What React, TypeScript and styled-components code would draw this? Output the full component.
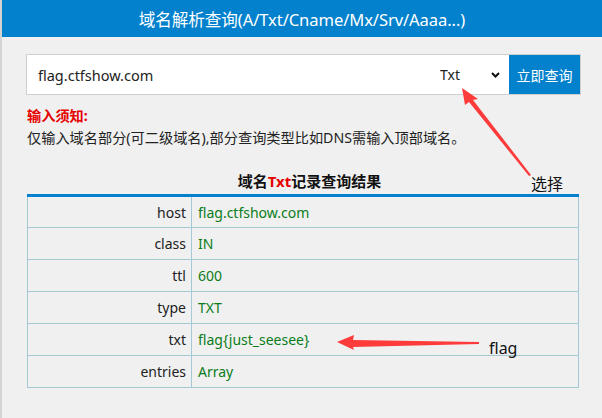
import React from "react";
import styled, { createGlobalStyle } from "styled-components";

const Global = createGlobalStyle`
  html, body { margin: 0; padding: 0; background: #f0f0f0; }
  body { font-family: "Noto Sans", "Noto Sans CJK SC", sans-serif; }
`;

const Page = styled.div`
  position: relative;
  width: 602px;
  height: 418px;
  box-sizing: border-box;
  border-left: 2px solid #d3d3d3;
  background: #f0f0f0;
  overflow: hidden;
`;

const Header = styled.div`
  height: 37px;
  background: #0381cd;
  color: #fff;
  display: flex;
  align-items: center;
  justify-content: center;
  font-size: 16.6px;
  letter-spacing: -0.1px;
`;

const Content = styled.div`
  padding: 17px 21px 0 24px;
`;

const SearchBar = styled.form`
  display: flex;
  height: 41px;
  box-sizing: border-box;
  border: 1px solid #cfcfcf;
  background: #fff;
  margin: 0;
`;

const DomainInput = styled.input`
  flex: 1;
  border: none;
  outline: none;
  background: transparent;
  padding: 0 0 0 11px;
  font-family: inherit;
  font-size: 14.5px;
  color: #222;
`;

const SelectWrap = styled.div`
  display: flex;
  align-items: center;
  width: 77px;
  padding-right: 9px;
  box-sizing: border-box;
`;

const TypeSelect = styled.select`
  appearance: none;
  border: none;
  outline: none;
  background: transparent;
  font-family: inherit;
  font-size: 14px;
  color: #222;
  padding: 0 0 0 8px;
  flex: 1;
`;

const SubmitButton = styled.button`
  width: 71px;
  border: none;
  background: #0381cd;
  color: #fff;
  font-family: inherit;
  font-size: 14px;
  padding: 0;
  cursor: pointer;
`;

const Notice = styled.div`
  margin: 10px 0 0 1px;
  font-size: 14.2px;
  line-height: 22px;
  color: #222;
`;

const NoticeTitle = styled.div`
  color: #e60000;
  font-weight: bold;
`;

const ResultTitle = styled.div`
  margin-top: 22px;
  text-align: center;
  font-size: 15px;
  font-weight: bold;
  color: #111;
  line-height: 20px;
  padding-left: 12px;
`;

const Highlight = styled.span`
  color: #e60000;
`;

const Table = styled.table`
  margin: 3px 0 0 1px;
  width: 552px;
  border-collapse: collapse;
  border-top: 3px solid #0381cd;
  font-size: 14px;
`;

const Row = styled.tr`
  height: 32px;
`;

const KeyCell = styled.td`
  width: 158px;
  border: 1px solid #a5c8d6;
  text-align: right;
  color: #222;
  padding: 0 5px 0 0;
`;

const ValueCell = styled.td`
  border: 1px solid #a5c8d6;
  color: #0a7d1a;
  padding: 0 0 0 6px;
`;

const Overlay = styled.svg`
  position: absolute;
  left: 0;
  top: 0;
  pointer-events: none;
`;

const Note = styled.div<{ $x: number; $y: number }>`
  position: absolute;
  left: ${(p) => p.$x}px;
  top: ${(p) => p.$y}px;
  font-size: 16px;
  color: #111;
  line-height: 20px;
`;

const rows: [string, string][] = [
  ["host", "flag.ctfshow.com"],
  ["class", "IN"],
  ["ttl", "600"],
  ["type", "TXT"],
  ["txt", "flag{just_seesee}"],
  ["entries", "Array"],
];

export default function App() {
  return (
    <Page>
      <Global />
      <Header>域名解析查询(A/Txt/Cname/Mx/Srv/Aaaa...)</Header>
      <Content>
        <SearchBar onSubmit={(e) => e.preventDefault()}>
          <DomainInput defaultValue="flag.ctfshow.com" />
          <SelectWrap>
            <TypeSelect defaultValue="Txt">
              <option>A</option>
              <option>Txt</option>
              <option>Cname</option>
              <option>Mx</option>
              <option>Srv</option>
              <option>Aaaa</option>
            </TypeSelect>
            <svg width="9" height="6" viewBox="0 0 9 6">
              <path d="M1 1 L4.5 4.5 L8 1" fill="none" stroke="#111" strokeWidth="2" />
            </svg>
          </SelectWrap>
          <SubmitButton type="submit">立即查询</SubmitButton>
        </SearchBar>
        <Notice>
          <NoticeTitle>输入须知:</NoticeTitle>
          <div>仅输入域名部分(可二级域名),部分查询类型比如DNS需输入顶部域名。</div>
        </Notice>
        <ResultTitle>
          域名<Highlight>Txt</Highlight>记录查询结果
        </ResultTitle>
        <Table>
          <tbody>
            {rows.map(([k, v]) => (
              <Row key={k}>
                <KeyCell>{k}</KeyCell>
                <ValueCell>{v}</ValueCell>
              </Row>
            ))}
          </tbody>
        </Table>
      </Content>
      <Overlay width="602" height="418" viewBox="0 0 602 418">
        <polygon points="460,88 476,99 471,100 529,175 527,176 467,102 463,105" fill="#fd3b3b" />
        <polygon points="335,342 352,335 351,340 477,342 477,344 351,347 352,350" fill="#fd3b3b" />
      </Overlay>
      <Note $x={529} $y={174}>选择</Note>
      <Note $x={487} $y={338}>flag</Note>
    </Page>
  );
}
